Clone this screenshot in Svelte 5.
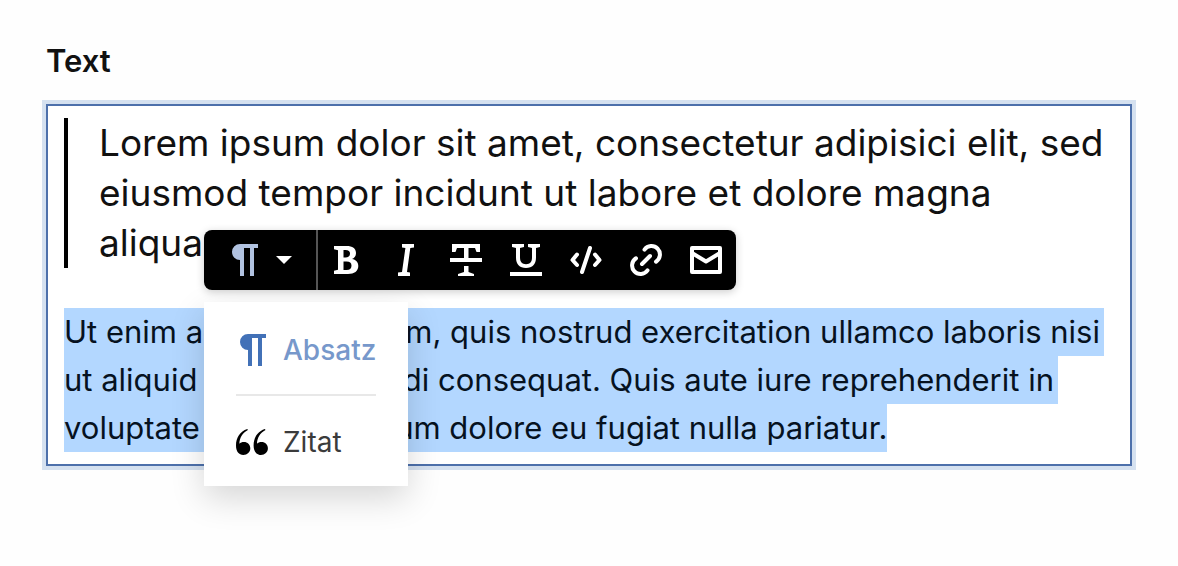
<script>
  const quote = [
    'Lorem ipsum dolor sit amet, consectetur adipisici elit, sed',
    'eiusmod tempor incidunt ut labore et dolore magna',
    'aliqua.'
  ];
  const selected = [
    'Ut enim ad minim veniam, quis nostrud exercitation ullamco laboris nisi',
    'ut aliquid ex ea commodi consequat. Quis aute iure reprehenderit in',
    'voluptate velit esse cillum dolore eu fugiat nulla pariatur.'
  ];
</script>

{#snippet pilcrow()}
  <svg class="icon" viewBox="0 0 32 32" aria-hidden="true">
    <path fill="currentColor" d="M12 0h18v4h-4v28h-4V4h-6v28h-4V16a8 8 0 0 1 0-16z" />
  </svg>
{/snippet}

<main class="page">
  <section class="field">
    <h2 class="label" id="text-label">Text</h2>
    <div class="editor">
      <div class="content" contenteditable="true" role="textbox" tabindex="0" aria-multiline="true" aria-labelledby="text-label" spellcheck="false">
        <blockquote>
          {#each quote as line}<span class="line">{line}</span>{/each}
        </blockquote>
        <p>
          {#each selected as line}<span class="line selected">{line}</span>{/each}
        </p>
      </div>

      <div class="floating">
        <div class="toolbar" role="toolbar" aria-label="Format">
          <button class="block-type" type="button" aria-haspopup="menu" aria-expanded="true" aria-label="Absatz">
            {@render pilcrow()}
            <svg class="caret" viewBox="0 0 16 8" aria-hidden="true"><path fill="#fff" d="M0 0h16L8 8z" /></svg>
          </button>
          <button type="button" aria-label="Fett">
            <svg class="icon" viewBox="0 0 32 32"><path fill="currentColor" fill-rule="evenodd" d="M4 2h12.500c6 0 9.500 2.500 9.500 7 0 3-1.500 5-4 6 3.800.7 6.300 3 6.300 7 0 5-4 8-10.300 8H4v-3.200l4-1V6.200l-4-1zM13.500 6v7.500h2c2.900 0 4.500-1.400 4.500-3.900C20 7.200 18.500 6 15.500 6zM13.500 17.500V26h3c3.300 0 5-1.500 5-4.300s-1.700-4.200-5-4.200z" /></svg>
          </button>
          <button type="button" aria-label="Kursiv">
            <svg class="icon" viewBox="0 0 32 32"><path fill="currentColor" d="M12 0h12v3.500l-3.700.5-3.300 24 3 .5V32H8v-3.500l4-.5 3.400-24-3.400-.5z" /></svg>
          </button>
          <button type="button" aria-label="Durchgestrichen">
            <svg class="icon" viewBox="0 0 32 32"><path fill="currentColor" d="M2 0h28v8h-3.500L25 4h-6.500v10H32v4H0v-4h14V4H7L5.500 8H2zM14 22h4.500v6l5.500 2v2H8v-2l6-2z" /></svg>
          </button>
          <button type="button" aria-label="Unterstrichen">
            <svg class="icon" viewBox="0 0 32 32"><path fill="currentColor" d="M2 0h12v3l-4 1v9.500c0 4.500 2 6.700 6 6.700s6-2.200 6-6.700V4l-4-1V0h12v3l-4 1v9.500C26 20.300 22.500 24 16 24S6 20.300 6 13.500V4L2 3zM0 28h32v4H0z" /></svg>
          </button>
          <button type="button" aria-label="Code">
            <svg class="icon stroke" viewBox="0 0 32 32"><path d="M20 4l-8 24" /><path d="M7 10.500L2.500 16 7 21M25 10.500l4.500 5.500-4.500 5" /></svg>
          </button>
          <button type="button" aria-label="Link">
            <svg class="icon stroke" viewBox="0 0 32 32"><path d="M14.500 5.600A8.500 8.500 0 1 1 26 17.700M17.500 26.400A8.500 8.500 0 1 1 6 14.300M12 20l8-8" /></svg>
          </button>
          <button type="button" aria-label="E-Mail">
            <svg class="icon stroke" viewBox="0 0 32 32"><path d="M2 4h28v24H2z" /><path d="M2 9l14 8.500L30 9" /></svg>
          </button>
        </div>

        <div class="menu" role="menu">
          <button class="item active" type="button" role="menuitem">{@render pilcrow()}<span>Absatz</span></button>
          <hr />
          <button class="item" type="button" role="menuitem">
            <svg class="icon" viewBox="0 0 32 32" aria-hidden="true"><g fill="#000"><path d="M11.300 3C4 5.500 0 11.500 0 19.500 0 25.500 3 29 7.300 29c4 0 7-2.900 7-6.700s-2.800-6.300-6.300-6.300c-2 0-3.700.7-4.600 1.700C3.500 11.700 6.500 7 11.900 4z" /><path d="M28.900 3c-7.300 2.500-11.300 8.500-11.300 16.500 0 6 3 9.500 7.300 9.500 4 0 7-2.900 7-6.700S29.100 16 25.600 16c-2 0-3.700.7-4.600 1.700.1-6 3.100-10.700 8.500-13.700z" /></g></svg>
            <span>Zitat</span>
          </button>
        </div>
      </div>
    </div>
  </section>
</main>

<style>
  :global(body) {
    margin: 0;
    background: #fefefe;
  }

  .page {
    padding: 41px 46px 80px;
    font-family: Inter, 'Open Sans', sans-serif;
    color: #111;
  }

  .label {
    margin: 0 0 23px;
    font-size: 31px;
    line-height: 40px;
    font-weight: 600;
  }

  .editor {
    position: relative;
    padding: 12px 16px;
    background: #fff;
    border: 2px solid #4d70ab;
    box-shadow: 0 0 0 4px #d5e1f0;
  }

  .content {
    outline: none;
  }

  blockquote {
    margin: 0 0 40px;
    padding-left: 31px;
    border-left: 4px solid #000;
    font-size: 37px;
    line-height: 50px;
  }

  p {
    margin: 0;
    font-size: 31px;
    line-height: 48px;
  }

  .line {
    display: block;
    width: fit-content;
    white-space: nowrap;
  }

  .selected {
    padding-right: 4px;
    background: #b3d7ff;
    color: #06121f;
  }

  .selected:last-child {
    padding-right: 0;
  }

  .floating {
    position: absolute;
    top: 124px;
    left: 156px;
  }

  button {
    display: flex;
    align-items: center;
    border: 0;
    padding: 0;
    background: none;
    color: inherit;
    font: inherit;
    cursor: pointer;
  }

  .icon {
    display: block;
    flex: none;
    width: 32px;
    height: 32px;
  }

  .stroke {
    fill: none;
    stroke: currentColor;
    stroke-width: 4;
    stroke-linecap: round;
    stroke-linejoin: round;
  }

  .toolbar {
    display: flex;
    width: max-content;
    height: 60px;
    overflow: hidden;
    border-radius: 8px;
    background: #000;
    color: #fff;
    box-shadow: 0 2px 8px rgb(0 0 0 / 20%);
  }

  .toolbar button {
    justify-content: center;
    width: 60px;
  }

  .toolbar .block-type {
    box-sizing: border-box;
    gap: 16px;
    width: 114px;
    margin-right: -2px;
    border-right: 2px solid #555;
    color: #b1c2e0;
  }

  .caret {
    width: 16px;
    height: 8px;
  }

  .menu {
    box-sizing: border-box;
    width: 204px;
    margin-top: 12px;
    padding: 24px 32px 20px;
    background: #fff;
    color: #3b3b3b;
    font-size: 28px;
    line-height: 48px;
    box-shadow: 0 12px 32px rgb(0 0 0 / 16%);
  }

  .item {
    gap: 15px;
  }

  .item.active {
    color: #4271b7;
    font-weight: 500;
  }

  .active span {
    color: #7798cb;
  }

  hr {
    margin: 20px 0 22px;
    border: 0;
    border-top: 2px solid #e8e8e8;
  }
</style>
